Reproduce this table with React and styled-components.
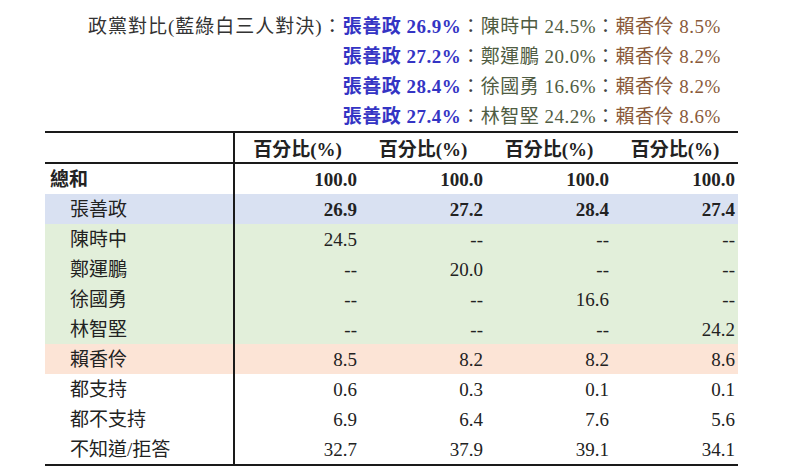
import React from "react";
import styled, { createGlobalStyle } from "styled-components";

const Global = createGlobalStyle`
  html, body { margin: 0; padding: 0; background: #ffffff; }
  body { width: 800px; height: 470px; overflow: hidden; }
`;

const FONT = `"Liberation Serif", "AR PL UKai TW", "Noto Sans CJK TC", serif`;

const Page = styled.div`
  width: 800px;
  font-family: ${FONT};
  color: #222;
`;

const Summary = styled.div`
  display: grid;
  grid-template-columns: auto auto;
  justify-content: start;
  padding: 12px 0 0 88px;
  font-size: 19px;
  line-height: 30px;
  height: 131px;
  box-sizing: border-box;
  overflow: hidden;
`;

const SummaryLabel = styled.div`
  color: #333;
  grid-row: 1;
  grid-column: 1;
  white-space: nowrap;
  letter-spacing: 1px;
  height: 30px;
`;

const Lines = styled.div`
  grid-column: 2;
  grid-row: 1 / span 4;
  display: flex;
  flex-direction: column;
`;

const Line = styled.div`
  white-space: nowrap;
  height: 30px;
  line-height: 30px;
  letter-spacing: 0.5px;
`;

const Seg = styled.span`
  color: ${(p) => p.$c};
  font-weight: ${(p) => (p.$bold ? 700 : 400)};
`;

const Colon = styled.span`
  color: #444;
`;

const Table = styled.table`
  margin-left: 45px;
  width: 693px;
  border-collapse: collapse;
  table-layout: fixed;
  font-size: 19px;
  border-top: 2px solid #1a1a1a;
  border-bottom: 2px solid #1a1a1a;
`;

const HeadRow = styled.tr`
  height: 31px;
  border-bottom: 2px solid #1a1a1a;
`;

const Th = styled.th`
  font-weight: 700;
  text-align: center;
  padding: 0;
  ${(p) => p.$divider && "border-right: 2px solid #1a1a1a;"}
`;

const Row = styled.tr`
  height: 30px;
  background: ${(p) => p.$bg || "transparent"};
`;

const LabelCell = styled.td`
  padding: 2px 0 0 ${(p) => (p.$indent ? 25 : 5)}px;
  font-weight: ${(p) => (p.$bold ? 700 : 400)};
  border-right: 2px solid #1a1a1a;
  white-space: nowrap;
  line-height: 28px;
`;

const NumCell = styled.td`
  padding: 2px 3px 0 0;
  text-align: right;
  font-weight: ${(p) => (p.$bold ? 700 : 400)};
  line-height: 28px;
`;

const BLUE = "#3434c4";
const GREEN = "#4f5c42";
const BROWN = "#8a5a3a";

const summary = [
  ["張善政 26.9%", "陳時中 24.5%", "賴香伶 8.5%"],
  ["張善政 27.2%", "鄭運鵬 20.0%", "賴香伶 8.2%"],
  ["張善政 28.4%", "徐國勇 16.6%", "賴香伶 8.2%"],
  ["張善政 27.4%", "林智堅 24.2%", "賴香伶 8.6%"],
];

const rows = [
  { label: "總和", vals: ["100.0", "100.0", "100.0", "100.0"], bold: true, labelBold: true },
  { label: "張善政", vals: ["26.9", "27.2", "28.4", "27.4"], bold: true, indent: true, bg: "#d9e1f2" },
  { label: "陳時中", vals: ["24.5", "--", "--", "--"], indent: true, bg: "#e2efda" },
  { label: "鄭運鵬", vals: ["--", "20.0", "--", "--"], indent: true, bg: "#e2efda" },
  { label: "徐國勇", vals: ["--", "--", "16.6", "--"], indent: true, bg: "#e2efda" },
  { label: "林智堅", vals: ["--", "--", "--", "24.2"], indent: true, bg: "#e2efda" },
  { label: "賴香伶", vals: ["8.5", "8.2", "8.2", "8.6"], indent: true, bg: "#fce4d6" },
  { label: "都支持", vals: ["0.6", "0.3", "0.1", "0.1"], indent: true },
  { label: "都不支持", vals: ["6.9", "6.4", "7.6", "5.6"], indent: true },
  { label: "不知道/拒答", vals: ["32.7", "37.9", "39.1", "34.1"], indent: true },
];

export default function App() {
  return (
    <Page>
      <Global />
      <Summary>
        <SummaryLabel>政黨對比(藍綠白三人對決)：</SummaryLabel>
        <Lines>
          {summary.map((l, i) => (
            <Line key={i}>
              <Seg $c={BLUE} $bold>{l[0]}</Seg>
              <Colon>：</Colon>
              <Seg $c={GREEN}>{l[1]}</Seg>
              <Colon>：</Colon>
              <Seg $c={BROWN}>{l[2]}</Seg>
            </Line>
          ))}
        </Lines>
      </Summary>
      <Table>
        <colgroup>
          <col style={{ width: 189 }} />
          <col style={{ width: 126 }} />
          <col style={{ width: 126 }} />
          <col style={{ width: 126 }} />
          <col style={{ width: 126 }} />
        </colgroup>
        <thead>
          <HeadRow>
            <Th $divider />
            <Th>百分比(%)</Th>
            <Th>百分比(%)</Th>
            <Th>百分比(%)</Th>
            <Th>百分比(%)</Th>
          </HeadRow>
        </thead>
        <tbody>
          {rows.map((r) => (
            <Row key={r.label} $bg={r.bg}>
              <LabelCell $indent={r.indent} $bold={r.labelBold}>{r.label}</LabelCell>
              {r.vals.map((v, j) => (
                <NumCell key={j} $bold={r.bold}>{v}</NumCell>
              ))}
            </Row>
          ))}
        </tbody>
      </Table>
    </Page>
  );
}
